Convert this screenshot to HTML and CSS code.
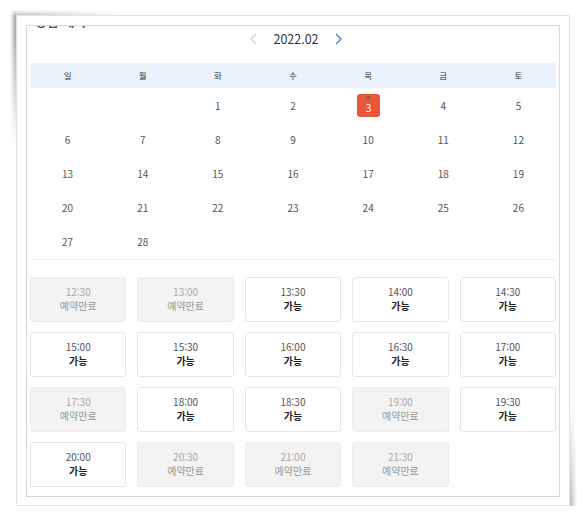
FILE: index.html
```html
<!DOCTYPE html>
<html lang="ko">
<head>
<meta charset="utf-8">
<title>예약</title>
<link rel="stylesheet" href="styles.css">
</head>
<body>
<div class="page">
  <div class="card">
    <span class="shade shade-l"></span>
    <span class="shade shade-t"></span>
    <span class="shade shade-tl"></span>
    <span class="shade shade-b"></span>
    <span class="shade shade-r"></span>
    <span class="shade shade-br"></span>
    <div class="shot">
      <div class="title">상담 예약</div>
      <div class="month-nav">
        <svg class="arrow" width="7" height="12" viewBox="0 0 7 12"><path d="M6 1 L1 6 L6 11" fill="none" stroke="#cfcfcf" stroke-width="1.2"/></svg>
        <span class="month">2022.02</span>
        <svg class="arrow" width="7" height="12" viewBox="0 0 7 12"><path d="M1 1 L6 6 L1 11" fill="none" stroke="#4a7cc4" stroke-width="1.3"/></svg>
      </div>
      <div class="week-head">
        <span>일</span><span>월</span><span>화</span><span>수</span><span>목</span><span>금</span><span>토</span>
      </div>
      <div class="dates">
        <span></span><span></span><span>1</span><span>2</span><span><b class="today">3</b></span><span>4</span><span>5</span>
        <span>6</span><span>7</span><span>8</span><span>9</span><span>10</span><span>11</span><span>12</span>
        <span>13</span><span>14</span><span>15</span><span>16</span><span>17</span><span>18</span><span>19</span>
        <span>20</span><span>21</span><span>22</span><span>23</span><span>24</span><span>25</span><span>26</span>
        <span>27</span><span>28</span><span></span><span></span><span></span><span></span><span></span>
      </div>
      <div class="slots">
        <div class="slot off"><span class="time">12:30</span><span class="state">예약만료</span></div>
        <div class="slot off"><span class="time">13:00</span><span class="state">예약만료</span></div>
        <div class="slot"><span class="time">13:30</span><span class="state">가능</span></div>
        <div class="slot"><span class="time">14:00</span><span class="state">가능</span></div>
        <div class="slot"><span class="time">14:30</span><span class="state">가능</span></div>
        <div class="slot"><span class="time">15:00</span><span class="state">가능</span></div>
        <div class="slot"><span class="time">15:30</span><span class="state">가능</span></div>
        <div class="slot"><span class="time">16:00</span><span class="state">가능</span></div>
        <div class="slot"><span class="time">16:30</span><span class="state">가능</span></div>
        <div class="slot"><span class="time">17:00</span><span class="state">가능</span></div>
        <div class="slot off"><span class="time">17:30</span><span class="state">예약만료</span></div>
        <div class="slot"><span class="time">18:00</span><span class="state">가능</span></div>
        <div class="slot"><span class="time">18:30</span><span class="state">가능</span></div>
        <div class="slot off"><span class="time">19:00</span><span class="state">예약만료</span></div>
        <div class="slot"><span class="time">19:30</span><span class="state">가능</span></div>
        <div class="slot"><span class="time">20:00</span><span class="state">가능</span></div>
        <div class="slot off"><span class="time">20:30</span><span class="state">예약만료</span></div>
        <div class="slot off"><span class="time">21:00</span><span class="state">예약만료</span></div>
        <div class="slot off"><span class="time">21:30</span><span class="state">예약만료</span></div>
      </div>
    </div>
  </div>
</div>
</body>
</html>
```
FILE: styles.css
```css
* { box-sizing: border-box; }
html, body { margin: 0; padding: 0; background: #fff; }
body {
  font-family: "Noto Sans CJK KR", "Noto Sans", sans-serif;
  color: #444;
}
.page {
  padding: 15px 0 0 16px;
}
.card {
  position: relative;
  width: 554px;
  height: 491px;
  background: #fff;
  border: 1px solid #e4e4e4;
  padding: 9px 9px 0 9px;
}
.shade {
  position: absolute;
  display: block;
  pointer-events: none;
}
.shade-l {
  left: -7px; top: -1px; width: 6px; height: 130px;
  background: linear-gradient(to left, rgba(0,0,0,0.36), rgba(0,0,0,0));
  -webkit-mask-image: linear-gradient(to bottom, #000 15%, transparent);
}
.shade-t {
  left: -1px; top: -6px; width: 110px; height: 5px;
  background: linear-gradient(to top, rgba(0,0,0,0.22), rgba(0,0,0,0));
  -webkit-mask-image: linear-gradient(to right, #000 10%, transparent);
}
.shade-tl {
  left: -7px; top: -6px; width: 6px; height: 5px;
  background: radial-gradient(circle at 100% 100%, rgba(0,0,0,0.25), rgba(0,0,0,0) 6px);
}
.shade-b {
  right: -1px; bottom: -8px; width: 220px; height: 7px;
  background: linear-gradient(to bottom, rgba(0,0,0,0.30), rgba(0,0,0,0));
  -webkit-mask-image: linear-gradient(to left, #000 10%, transparent);
}
.shade-r {
  right: -8px; bottom: -1px; width: 7px; height: 100px;
  background: linear-gradient(to right, rgba(0,0,0,0.26), rgba(0,0,0,0));
  -webkit-mask-image: linear-gradient(to top, #000 10%, transparent);
}
.shade-br {
  right: -8px; bottom: -8px; width: 7px; height: 7px;
  background: radial-gradient(circle at 0 0, rgba(0,0,0,0.28), rgba(0,0,0,0) 7px);
}
.shot {
  width: 534px;
  height: 472px;
  border: 1px solid #d8d8d8;
  overflow: hidden;
  padding: 0 3px;
  background: #fff;
}
.title {
  height: 16px;
  line-height: 16px;
  margin-top: -13px;
  padding-left: 5px;
  font-size: 13px;
  font-weight: bold;
  color: #555;
}
.month-nav {
  height: 20px;
  display: flex;
  align-items: center;
  justify-content: center;
  gap: 16px;
  padding-left: 6px;
}
.month {
  font-size: 12.5px;
  color: #333;
  line-height: 20px;
}
.arrow { display: block; }
.week-head {
  margin-top: 14px;
  height: 25px;
  background: #eaf3fc;
  display: grid;
  grid-template-columns: repeat(7, 1fr);
  font-size: 8.5px;
  color: #333;
  line-height: 25px;
  text-align: center;
}
.dates {
  display: grid;
  grid-template-columns: repeat(7, 1fr);
  grid-auto-rows: 34.2px;
  font-size: 10px;
  color: #555;
  text-align: center;
  border-bottom: 1px solid #eef2f5;
}
.dates span {
  display: flex;
  align-items: center;
  justify-content: center;
}
.today {
  position: relative;
  width: 23px;
  height: 23px;
  border-radius: 3px;
  background: #e8573a;
  color: #fff;
  font-weight: normal;
  display: flex;
  align-items: center;
  justify-content: center;
  padding-top: 4px;
  margin-left: 1px;
}
.today::before {
  content: "";
  position: absolute;
  left: 10px;
  top: 2px;
  width: 3px;
  height: 3px;
  border-radius: 50%;
  background: #9b4a3e;
}
.slots {
  margin-top: 17px;
  display: grid;
  grid-template-columns: repeat(5, 1fr);
  grid-auto-rows: 45px;
  column-gap: 11px;
  row-gap: 10px;
}
.slot {
  border: 1px solid #e6e6e6;
  border-radius: 3px;
  background: #fff;
  display: flex;
  flex-direction: column;
  align-items: center;
  justify-content: center;
  font-size: 10px;
  line-height: 14px;
}
.slot .time { color: #555; }
.slot .state { color: #222; font-weight: bold; }
.slot.off {
  background: #f3f3f3;
  border-color: #ececec;
}
.slot.off .time { color: #a8a8a8; }
.slot.off .state { color: #9a9a9a; font-weight: normal; }
```
